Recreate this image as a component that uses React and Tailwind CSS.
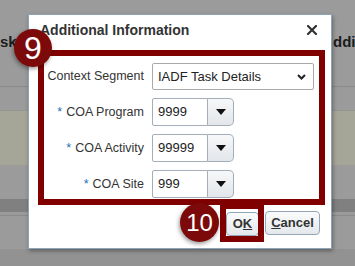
import React from 'react';

const font = { fontFamily: '"Liberation Sans", Arial, sans-serif' };

function Caret() {
  return (
    <svg width="10" height="6" viewBox="0 0 10 6">
      <path d="M0 0 L10 0 L5 6 Z" fill="#111" />
    </svg>
  );
}

function Combo({ value }) {
  return (
    <div className="flex h-[28px] w-[82px]">
      <div className="flex flex-1 items-center rounded-l-[2px] border border-[#a3aeb9] bg-white pl-[5px] text-[13px] text-[#222]">
        {value}
      </div>
      <div className="flex w-[26px] items-center justify-center rounded-r-[5px] border border-l-0 border-[#a3aeb9] bg-gradient-to-b from-[#f7f8f9] to-[#e2e6ea]">
        <Caret />
      </div>
    </div>
  );
}

function Field({ label, required, children }) {
  return (
    <div className="flex items-center gap-[8px]">
      <div className="flex w-[99px] shrink-0 justify-end whitespace-nowrap text-[12.5px] text-[#333]">
        {required && <span className="mr-[4px] text-[#1d6fb8]">*</span>}
        {label}
      </div>
      {children}
    </div>
  );
}

export default function App() {
  return (
    <div className="relative h-[266px] w-[355px] overflow-hidden bg-[#9b9b9b]" style={font}>
      {/* page behind the overlay */}
      <div className="flex h-[86px] items-start pt-[31px] text-[15px] font-bold text-[#1c1c1c]">
        <div className="w-[333px] shrink-0">sk Name</div>
        <div className="shrink-0 whitespace-nowrap">dditional</div>
      </div>
      <div className="h-px bg-[#8a8a8a]" />
      <div className="h-[23px]" />
      <div className="h-[55px] border-t border-[#959591] bg-[#a5a598]" />
      <div className="h-[34px]" />
      <div className="h-[13px] bg-[#808080]" />
      <div className="h-[3px]" />
      <div className="h-px bg-[#8a8a8a]" />
      <div className="h-[33px]" />
      <div className="h-[18px] bg-[#929292]" />

      {/* dialog */}
      <div className="absolute left-[28px] top-[14px] flex h-[235px] w-[304px] flex-col border border-[#8ea4b7] bg-white shadow-[1px_2px_4px_rgba(0,0,0,0.35)]">
        <div className="flex h-[30px] items-center justify-between pl-[11px] pr-[14px]">
          <span className="text-[14px] font-bold text-[#333]">Additional Information</span>
          <svg width="10" height="10" viewBox="0 0 10 10">
            <path d="M1 1 L9 9 M9 1 L1 9" stroke="#333" strokeWidth="2.2" strokeLinecap="square" />
          </svg>
        </div>

        <div className="ml-[9px] mt-[5px] flex h-[155px] w-[287px] flex-col gap-[8px] border-[6px] border-[#800000] pt-[7px] pl-[1px]">
          <Field label="Context Segment">
            <div className="flex h-[27px] w-[162px] items-center justify-between rounded-[2px] border border-[#a9a9a9] bg-white pl-[5px] pr-[7px] text-[13px] text-[#222]">
              <span>IADF Task Details</span>
              <svg width="9" height="6" viewBox="0 0 9 6">
                <path d="M1 1 L4.5 4.5 L8 1" fill="none" stroke="#222" strokeWidth="2" />
              </svg>
            </div>
          </Field>
          <Field label="COA Program" required>
            <Combo value="9999" />
          </Field>
          <Field label="COA Activity" required>
            <Combo value="99999" />
          </Field>
          <Field label="COA Site" required>
            <Combo value="999" />
          </Field>
        </div>

        <div className="mt-[6px] flex justify-end gap-[6px] pr-[11px]">
          <div className="relative">
            <button className="h-[24px] w-[33px] rounded-[4px] border border-[#93a6b8] bg-gradient-to-b from-[#fafbfc] to-[#e4e8ec] text-[13px] font-bold text-[#333]">
              O<span className="underline">K</span>
            </button>
            <div className="absolute -bottom-[6px] -left-[6px] -right-[5px] -top-[8px] border-[6px] border-[#800000]" />
          </div>
          <button className="h-[24px] w-[55px] rounded-[4px] border border-[#93a6b8] bg-gradient-to-b from-[#fafbfc] to-[#e4e8ec] text-[13px] font-bold text-[#333]">
            <span className="underline">C</span>ancel
          </button>
        </div>
      </div>

      {/* step badges */}
      <div className="absolute left-[14px] top-[29px] flex h-[38px] w-[38px] items-center justify-center rounded-full bg-[#7d0a0a] text-[32px] leading-none text-white shadow-[-1px_2px_4px_rgba(0,0,0,0.4)]">
        9
      </div>
      <div className="absolute left-[180px] top-[203px] flex h-[39px] w-[39px] items-center justify-center rounded-full bg-[#7d0a0a] text-[24px] leading-none text-white shadow-[-1px_2px_4px_rgba(0,0,0,0.4)]">
        10
      </div>
    </div>
  );
}
